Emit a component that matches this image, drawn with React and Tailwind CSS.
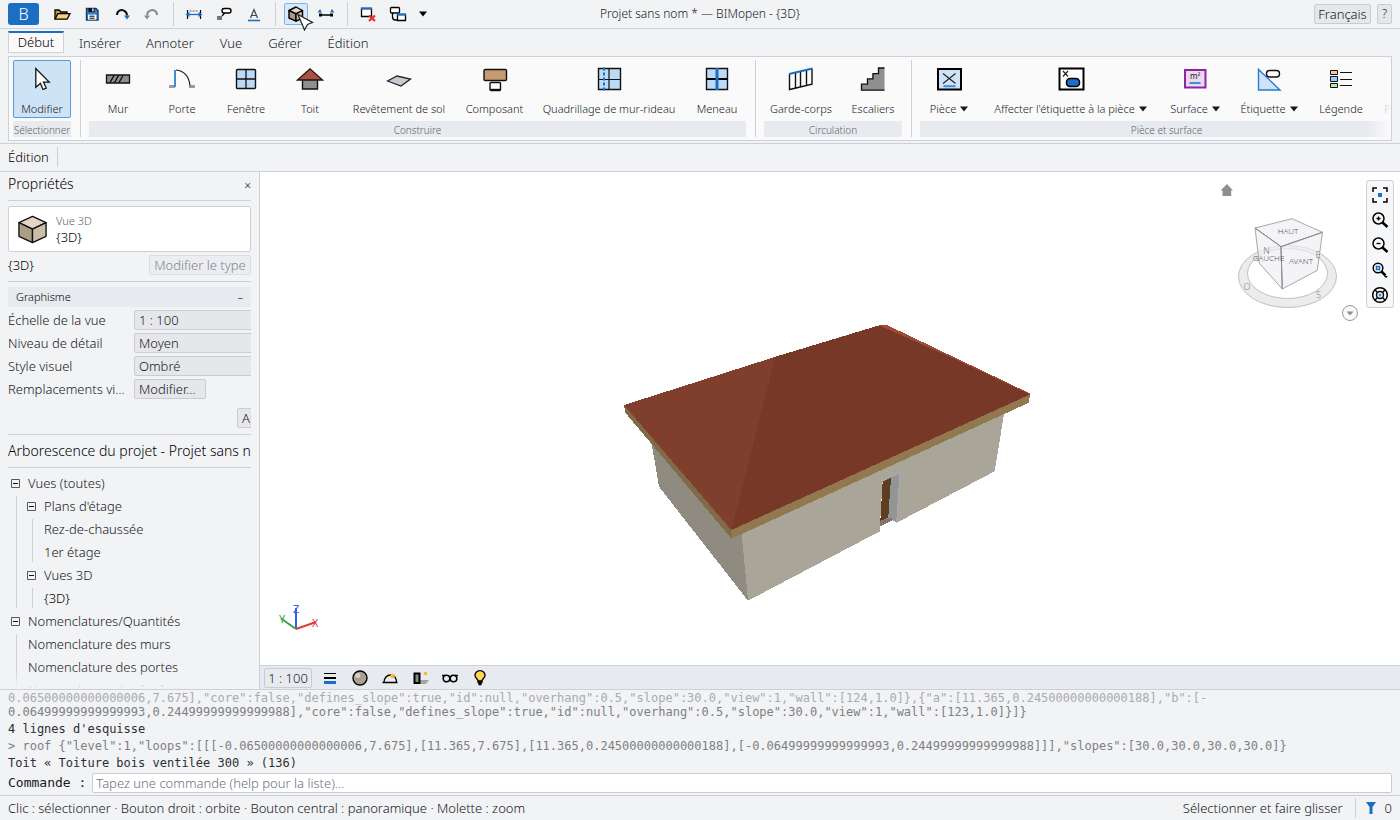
import React from 'react';
import clsx from 'clsx';

/* Quick access icons, 20x20 */

const OpenIcon = () => (
  <svg width="20" height="20" viewBox="0 0 20 20">
    <path d="M3 15V6h4l2 2h6v2" fill="#c99a3c" stroke="#000" strokeWidth="1.3" />
    <path d="M3 15.2 5.8 9.6H18l-2.8 5.6Z" fill="#f3cf76" stroke="#000" strokeWidth="1.3" />
  </svg>
);

const SaveIcon = () => (
  <svg width="20" height="20" viewBox="0 0 20 20">
    <path d="M4.5 4.5h9.5l2 2v9.5H4.5Z" fill="#2f7dd0" stroke="#1c3f66" strokeWidth="1.4" />
    <path d="M6.5 4h6v4.1h-6Z" fill="#111" />
    <path d="M10.2 4.6h1.4v2.6h-1.4Z" fill="#fff" />
    <path d="M6 10.6h8.4v5H6Z" fill="#fff" />
    <path d="M7.5 12.2h5M7.5 14.2h5" stroke="#000" strokeWidth="1" />
  </svg>
);

const RedoIcon = ({ color, tip, flip }) => (
  <svg width="20" height="20" viewBox="0 0 20 20">
    <g transform={flip ? 'translate(20 0) scale(-1 1)' : undefined}>
      <path d="M5 11C5 6.6 9 5 12 6.6c2 1 3 2.8 3 5" fill="none" stroke={color} strokeWidth="2" />
      <path d="M12 11.5h6L15 15.6Z" fill={tip} />
    </g>
  </svg>
);

const DimensionIcon = () => (
  <svg width="20" height="20" viewBox="0 0 20 20" fill="none">
    <path d="M5.5 7h9" stroke="#aaa" strokeWidth="2" strokeDasharray="2 1" />
    <path d="M3.5 6v9M16.5 6v9" stroke="#000" strokeWidth="1.2" />
    <path d="M4.5 10.5h11" stroke="#1b6ec4" strokeWidth="1.3" />
    <path d="m1.5 10.5 4-2.4v4.8ZM18.5 10.5l-4-2.4v4.8Z" fill="#1b6ec4" />
  </svg>
);

const TagIcon = () => (
  <svg width="20" height="20" viewBox="0 0 20 20" fill="none">
    <path d="M3 12h5v4H3Z" fill="#777" />
    <path d="m8 12 3-3.5" stroke="#000" strokeWidth="1.2" />
    <rect x="8" y="4.5" width="9" height="4.5" rx="2.2" fill="#fff" stroke="#000" strokeWidth="1.4" />
  </svg>
);

const TextIcon = () => (
  <svg width="20" height="20" viewBox="0 0 20 20" fill="none">
    <path d="m6.5 14 3.5-8.5L13.5 14M7.5 11.5h5" stroke="#444" strokeWidth="1.2" />
    <path d="M4 16.5h12" stroke="#1b6ec4" strokeWidth="1.6" />
  </svg>
);

const CubeIcon = ({ size = 20 }) => (
  <svg width={size} height={size} viewBox="0 0 32 32" stroke="#111" strokeWidth="1.4" strokeLinejoin="round">
    <path d="M2 9 16 2.5 30 9 16 15.5Z" fill="#e3d7c3" />
    <path d="M2 9v14l14 6.5v-14Z" fill="#ab9d86" />
    <path d="M30 9v14l-14 6.5v-14Z" fill="#cbbda6" />
  </svg>
);

const QuickCubeIcon = () => (
  <svg width="20" height="20" viewBox="0 0 20 20" stroke="#000" strokeWidth="1.4" strokeLinejoin="round">
    <path d="m3 6.5 7-3.5 6.5 3.5L10 9.8Z" fill="#e3d7c3" />
    <path d="M3 6.5v7.5l7 3.2V9.8Z" fill="#ab9d86" />
    <path d="M16.5 6.5v7.5L10 17.2V9.8Z" fill="#cbbda6" />
  </svg>
);

const SectionIcon = () => (
  <svg width="20" height="20" viewBox="0 0 20 20">
    <path d="M4 11h12" stroke="#000" strokeWidth="1.5" />
    <path d="M3 9.5h3v3H3ZM14 9.5h3v3h-3Z" fill="#000" />
    <path d="M1.5 8.5 4 5l2 3.5ZM14 8.5 16 5l2.5 3.5Z" fill="#1b6ec4" />
  </svg>
);

const CloseViewsIcon = () => (
  <svg width="20" height="20" viewBox="0 0 20 20">
    <path d="M3.5 4.5h10v8h-10Z" fill="#fff" stroke="#000" strokeWidth="1.3" />
    <path d="M3 4.5h11" stroke="#1b6ec4" strokeWidth="2" />
    <path d="m11 11.5 6 5.5M17 11.5 11 17" stroke="#e03030" strokeWidth="2.2" />
  </svg>
);

const SwitchViewsIcon = () => (
  <svg width="20" height="20" viewBox="0 0 20 20" fill="#fff" stroke="#000" strokeWidth="1.3">
    <rect x="2.5" y="3.5" width="9" height="5.5" rx="1" />
    <path d="M4.500 9v4c0 2 1 3 3 3h2" fill="none" />
    <path d="M9.500 10.500h8v6h-8Z" />
    <path d="M9 10.500h9" stroke="#1b6ec4" strokeWidth="2" />
  </svg>
);

const CaretIcon = ({ className }) => (
  <svg width="8" height="6" viewBox="0 0 8 6" className={className}>
    <path d="M0 0.5h8L4 5.5Z" fill="currentColor" />
  </svg>
);

/* Ribbon icons, 28x28 */

const Icon28 = ({ children }) => (
  <svg width="28" height="28" viewBox="0 0 28 28" fill="none">{children}</svg>
);

const icons = {
  modify: (
    <Icon28>
      <path d="M7.8 3.5v18.8l4.6-4 2.6 6.2 3.2-1.4-2.7-6h5.7Z" fill="#fff" stroke="#111" strokeWidth="1.3" />
    </Icon28>
  ),
  wall: (
    <Icon28>
      <path d="M2.5 10h23v8h-23Z" fill="#8c8c8c" stroke="#111" strokeWidth="1.3" />
      <path d="m6 17.5 4-7M10.5 17.5l4-7M15 17.5l4-7" stroke="#000" strokeWidth="1.2" />
    </Icon28>
  ),
  door: (
    <Icon28>
      <path d="M1 20h6v3H1ZM21 20h6v3h-6Z" fill="#9a9a9a" />
      <path d="M8 5c8 1 13 6.5 14 15.5" stroke="#222" strokeWidth="1.2" />
      <path d="M7 5v17" stroke="#3f8cda" strokeWidth="2" />
    </Icon28>
  ),
  window: (
    <Icon28>
      <rect x="4.5" y="4.5" width="19" height="19" rx="1" fill="#bcdaf5" stroke="#111" strokeWidth="1.4" />
      <path d="M14 4.5v19M4.5 14h19" stroke="#111" strokeWidth="1.3" />
    </Icon28>
  ),
  roof: (
    <Icon28>
      <path d="M6.5 13h15v11h-15Z" fill="#8f8f8f" stroke="#111" strokeWidth="1.4" />
      <path d="M1.5 15 14 3.8 26.5 15Z" fill="#ad523f" stroke="#221512" strokeWidth="1.3" />
    </Icon28>
  ),
  floor: (
    <Icon28>
      <path d="m2.5 16 9.5-5 13.5 3L16 21Z" fill="#c5cbd5" stroke="#222" strokeWidth="1.3" />
    </Icon28>
  ),
  component: (
    <Icon28>
      <rect x="3" y="4.5" width="22.5" height="11" rx="1.2" fill="#c79b72" stroke="#111" strokeWidth="1.4" />
      <rect x="9" y="17.5" width="10.5" height="8" rx="1" fill="#fff" stroke="#111" strokeWidth="1.4" />
      <path d="M9.5 24.8h10" stroke="#111" strokeWidth="2" />
    </Icon28>
  ),
  curtain: (
    <Icon28>
      <path d="M3.5 3.5h22v21h-22Z" fill="#bcdaf5" stroke="#111" strokeWidth="1.4" />
      <path d="M14 3.5v21M3.5 14.5h22" stroke="#111" strokeWidth="1.2" />
      <path d="M9 2.5v23" stroke="#1b6ec4" strokeWidth="2" strokeDasharray="3 2" />
    </Icon28>
  ),
  mullion: (
    <Icon28>
      <path d="M3.5 3.5h21v21h-21Z" fill="#bcdaf5" stroke="#111" strokeWidth="1.4" />
      <path d="M3.5 14h21" stroke="#000" strokeWidth="2" />
      <path d="M14 3v22" stroke="#1b6ec4" strokeWidth="3" />
    </Icon28>
  ),
  railing: (
    <Icon28>
      <path d="M2.5 9v15.5L25 19.2V4M8.5 8v14.5M13.5 7v14.5M19.5 5.5V20" stroke="#111" strokeWidth="1.4" />
      <path d="M2 9 25.5 3.5" stroke="#1b6ec4" strokeWidth="2" />
    </Icon28>
  ),
  stairs: (
    <Icon28>
      <path d="M2.5 25.2v-6h5.5v-5.4h5.5V8.600H19V3h6.5v22.2Z" fill="#8f8f8f" />
      <path d="M25.5 3H19.5v5.6H14v5.2H8.5v5.4h-6v6h23" stroke="#111" strokeWidth="1.3" />
    </Icon28>
  ),
  room: (
    <Icon28>
      <path d="M3 4h23v20.5H3Z" fill="#cfe3f8" stroke="#000" strokeWidth="2" />
      <path d="m8 8.5 12.5 10M20.5 8.5 8 18.5" stroke="#222" strokeWidth="1.2" />
      <path d="M8.5 21.2h12" stroke="#3f8cda" strokeWidth="2" />
    </Icon28>
  ),
  roomTag: (
    <Icon28>
      <path d="M2.5 3.5h24v21h-24Z" fill="#fff" stroke="#000" strokeWidth="2" />
      <path d="m6 6 5 5.5M11 6l-5 5.5" stroke="#222" strokeWidth="1.2" />
      <rect x="9.5" y="13.5" width="13" height="8" rx="3.5" fill="#1b6ec4" stroke="#000" strokeWidth="1.5" />
    </Icon28>
  ),
  area: (
    <Icon28>
      <path d="M4 5h20.5v17.5H4Z" fill="#ead8ec" stroke="#8e24a0" strokeWidth="2" />
      <text x="9" y="14" fontSize="8" fontWeight="400" fill="#222">m²</text>
      <path d="M8.5 18h11" stroke="#3f8cda" strokeWidth="2" />
    </Icon28>
  ),
  label: (
    <Icon28>
      <path d="M3.5 4.5v20.5H25Z" fill="#cfe3f8" stroke="#2a7bd0" strokeWidth="1.4" />
      <rect x="11.5" y="5.5" width="13" height="6.5" rx="3" fill="#fff" stroke="#111" strokeWidth="1.4" />
    </Icon28>
  ),
  legend: (
    <Icon28>
      <g stroke="#111" strokeWidth="1">
        <path d="M3.5 5.5h7v4h-7Z" fill="#ffc48f" />
        <path d="M3.5 11.5h7v5h-7Z" fill="#9ccfff" />
        <path d="M3.5 18.5h7v4h-7Z" fill="#b9ea98" />
        <path d="M13 7.5h12M13 14.5h12M13 20.5h12" />
      </g>
    </Icon28>
  ),
};

const tabs = [
  { label: 'Début', width: 'w-[56px]', active: true },
  { label: 'Insérer', width: 'w-[60px]' },
  { label: 'Annoter', width: 'w-[68px]' },
  { label: 'Vue', width: 'w-[42px]' },
  { label: 'Gérer', width: 'w-[54px]' },
  { label: 'Édition', width: 'w-[60px]' },
];

const ribbonGroups = [
  {
    label: 'Sélectionner',
    items: [{ label: 'Modifier', icon: 'modify', width: 'w-[58px]', active: true }],
  },
  {
    label: 'Construire',
    items: [
      { label: 'Mur', icon: 'wall', width: 'w-[58px]' },
      { label: 'Porte', icon: 'door', width: 'w-[58px]' },
      { label: 'Fenêtre', icon: 'window', width: 'w-[58px]' },
      { label: 'Toit', icon: 'roof', width: 'w-[58px]' },
      { label: 'Revêtement de sol', icon: 'floor', width: 'w-[108px]' },
      { label: 'Composant', icon: 'component', width: 'w-[71px]' },
      { label: 'Quadrillage de mur-rideau', icon: 'curtain', width: 'w-[146px]' },
      { label: 'Meneau', icon: 'mullion', width: 'w-[58px]' },
    ],
  },
  {
    label: 'Circulation',
    items: [
      { label: 'Garde-corps', icon: 'railing', width: 'w-[74px]' },
      { label: 'Escaliers', icon: 'stairs', width: 'w-[58px]' },
    ],
  },
  {
    label: 'Pièce et surface',
    items: [
      { label: 'Pièce', icon: 'room', width: 'w-[58px]', menu: true },
      { label: "Affecter l'étiquette à la pièce", icon: 'roomTag', width: 'w-[173px]', menu: true },
      { label: 'Surface', icon: 'area', width: 'w-[64px]', menu: true },
      { label: 'Étiquette', icon: 'label', width: 'w-[72px]', menu: true },
      { label: 'Légende', icon: 'legend', width: 'w-[60px]' },
      { label: 'Plan', width: 'w-[36px]' },
    ],
  },
];

const tree = [
  {
    label: 'Vues (toutes)',
    children: [
      { label: "Plans d'étage", children: [{ label: 'Rez-de-chaussée' }, { label: '1er étage' }] },
      { label: 'Vues 3D', children: [{ label: '{3D}', active: true }] },
    ],
  },
  {
    label: 'Nomenclatures/Quantités',
    children: [
      { label: 'Nomenclature des murs' },
      { label: 'Nomenclature des portes' },
      { label: 'Nomenclature des fenêtres' },
    ],
  },
];

const history = [
  { text: '0.06500000000000006,7.675],"core":false,"defines_slope":true,"id":null,"overhang":0.5,"slope":30.0,"view":1,"wall":[124,1.0]},{"a":[11.365,0.24500000000000188],"b":[-', tone: 'text-[#a9abb0]', tight: true },
  { text: '0.06499999999999993,0.24499999999999988],"core":false,"defines_slope":true,"id":null,"overhang":0.5,"slope":30.0,"view":1,"wall":[123,1.0]}]}', tone: 'text-[#7d7f84]' },
  { text: "4 lignes d'esquisse", tone: 'text-[#2c2e33]' },
  { text: '> roof {"level":1,"loops":[[[-0.06500000000000006,7.675],[11.365,7.675],[11.365,0.24500000000000188],[-0.06499999999999993,0.24499999999999988]]],"slopes":[30.0,30.0,30.0,30.0]}', tone: 'text-[#7d7f84]' },
  { text: 'Toit « Toiture bois ventilée 300 » (136)', tone: 'text-[#2c2e33]' },
];

const QuickButton = ({ label, active, children }) => (
  <button
    aria-label={label}
    className={clsx(
      'relative flex h-[22px] w-6 items-center justify-center rounded-xs',
      active && 'border border-[#7fb2e6] bg-[#d9e8f8]'
    )}
  >
    {children}
  </button>
);

const QuickSeparator = () => <div className="mr-[2px] ml-[3px] h-6 w-px bg-[#cdd0d8]" />;

const TitleBar = () => (
  <header className="grid h-[29px] grid-cols-[1fr_auto_1fr] items-center border-b border-[#cdd0d8] px-2">
    <div className="flex items-center gap-[6px]">
      <button className="mr-[5px] h-[22px] w-[31px] rounded-[3px] bg-[#1b6ec4] text-base leading-none text-white">B</button>
      <QuickButton label="Ouvrir"><OpenIcon /></QuickButton>
      <QuickButton label="Enregistrer"><SaveIcon /></QuickButton>
      <QuickButton label="Annuler"><RedoIcon color="#111" tip="#1b6ec4" /></QuickButton>
      <QuickButton label="Rétablir"><RedoIcon color="#8b8b8b" tip="#8b8b8b" flip /></QuickButton>
      <QuickSeparator />
      <QuickButton label="Cote"><DimensionIcon /></QuickButton>
      <QuickButton label="Étiqueter"><TagIcon /></QuickButton>
      <QuickButton label="Texte"><TextIcon /></QuickButton>
      <QuickSeparator />
      <QuickButton label="Vue 3D" active>
        <QuickCubeIcon />
        {/* Pointer */}
        <svg width="18" height="18" viewBox="0 0 18 18" className="absolute top-[9px] left-3 z-10">
          <path d="M1 1.5 15.5 9.5 10.5 11.5 7.5 17Z" fill="#fff" stroke="#222" strokeWidth="1.2" />
        </svg>
      </QuickButton>
      <QuickButton label="Coupe"><SectionIcon /></QuickButton>
      <QuickSeparator />
      <QuickButton label="Fermer les vues inactives"><CloseViewsIcon /></QuickButton>
      <QuickButton label="Changer de fenêtre"><SwitchViewsIcon /></QuickButton>
      <button aria-label="Personnaliser" className="flex w-[14px] justify-center text-black">
        <CaretIcon />
      </button>
    </div>
    <h1 className="text-[12px]">Projet sans nom * — BIMopen - {'{3D}'}</h1>
    <div className="flex justify-end gap-[6px]">
      <button className="h-5 w-[57px] rounded-xs border border-[#c9ccd4] bg-[#e6e7eb] leading-[18px]">Français</button>
      <button className="h-5 w-[15px] rounded-xs border border-[#c9ccd4] bg-[#e6e7eb] text-[12px] leading-[18px]">?</button>
    </div>
  </header>
);

const RibbonButton = ({ item }) => (
  <button
    className={clsx(
      'flex h-[58px] shrink-0 flex-col items-center rounded-xs border pt-1',
      item.width,
      item.active ? 'border-[#5b9bdc] bg-[#cfe3f7]' : 'border-transparent'
    )}
  >
    <span className="h-7">{item.icon && icons[item.icon]}</span>
    <span className="mt-2 flex items-center text-[11px] leading-4 whitespace-nowrap">
      {item.label}
      {item.menu && <CaretIcon className="ml-1" />}
    </span>
  </button>
);

const Ribbon = () => (
  <div className="px-2 pb-[2px]">
    <div className="relative flex overflow-hidden border border-[#cdd0d8] bg-[#fafafb] px-1 py-[3px]">
      {ribbonGroups.map((group, i) => (
        <React.Fragment key={group.label}>
          {i > 0 && <div className="mr-2 ml-[9px] w-px shrink-0 bg-[#cdd0d8]" />}
          <section className="flex shrink-0 flex-col gap-[3px]">
            <div className="flex gap-[6px]">
              {group.items.map((item) => (
                <RibbonButton key={item.label} item={item} />
              ))}
            </div>
            <div className="h-4 bg-[#e7eaef] text-center text-[10px] leading-[18px] text-[#5f636b]">{group.label}</div>
          </section>
        </React.Fragment>
      ))}
      <div className="absolute inset-y-0 right-0 w-6 bg-linear-to-r from-transparent to-[#fafafb]" />
    </div>
  </div>
);

const propertyRows = [
  { id: 'scale', label: 'Échelle de la vue', value: '1 : 100' },
  { id: 'detail', label: 'Niveau de détail', value: 'Moyen' },
  { id: 'style', label: 'Style visuel', value: 'Ombré' },
];

const Properties = () => (
  <section>
    <div className="flex h-[29px] items-center justify-between border-b border-[#cdd0d8] pb-1">
      <h2 className="text-[14px] text-[#000]">Propriétés</h2>
      <button aria-label="Fermer" className="pt-[3px] text-[12px]">×</button>
    </div>
    <div className="mt-[5px] flex h-[46px] items-center gap-2 rounded-xs border border-[#cdd0d8] bg-white px-2">
      <CubeIcon size={31} />
      <div>
        <p className="text-[11px] leading-4 text-[#5f636b]">Vue 3D</p>
        <p className="leading-4 text-[#000]">{'{3D}'}</p>
      </div>
    </div>
    <div className="mt-[3px] flex h-5 items-center justify-between">
      <span className="text-[#000]">{'{3D}'}</span>
      <button disabled className="h-5 w-[102px] rounded-xs border border-[#dcdee3] bg-[#ecedf0] leading-[18px] text-[#82858c]">
        Modifier le type
      </button>
    </div>
    <button className="mt-[6px] flex w-full flex-col border-t border-[#cdd0d8] pt-[5px] text-[#000]">
      <span className="flex h-5 w-full items-center justify-between bg-[#e7eaef] px-2 text-[11px]">
        Graphisme
        <span>–</span>
      </span>
    </button>
    <div className="mt-[3px] flex flex-col gap-[3px]">
      {propertyRows.map((row) => (
        <div key={row.id} className="flex h-5 items-center">
          <label htmlFor={row.id} className="w-[126px] shrink-0">{row.label}</label>
          <select id={row.id} className="h-5 w-40 shrink-0 appearance-none rounded-xs border border-[#c9ccd4] bg-[#e6e7eb] px-1 leading-[18px]">
            <option>{row.value}</option>
          </select>
        </div>
      ))}
      <div className="flex h-5 items-center">
        <span className="mr-1 w-[122px] shrink-0 truncate">Remplacements visibilité</span>
        <button className="h-5 w-[72px] rounded-xs border border-[#c9ccd4] bg-[#e6e7eb] px-1 text-left leading-[18px]">Modifier…</button>
      </div>
    </div>
    <div className="mt-[9px] border-b border-[#cdd0d8] pb-[6px]">
      <button className="ml-[229px] block h-5 w-20 rounded-xs border border-[#c9ccd4] bg-[#e6e7eb] px-1 text-left leading-[18px]">Appliquer</button>
    </div>
  </section>
);

const TreeNode = ({ node }) => (
  <li>
    {node.children ? (
      <button className="flex h-5 items-center gap-2 pl-[3px] whitespace-nowrap">
        <svg width="9" height="9" viewBox="0 0 9 9">
          <path d="M0.5 0.5h8v8h-8Z" fill="none" stroke="#555a62" />
          <path d="M2 4.5h5" stroke="#111" />
        </svg>
        {node.label}
      </button>
    ) : (
      <button className={clsx('flex h-5 items-center pl-1 whitespace-nowrap', node.active && 'text-[#000]')}>{node.label}</button>
    )}
    {node.children && (
      <ul className="mt-[3px] ml-2 flex flex-col gap-[3px] border-l border-[#cdd0d8] pl-[7px]">
        {node.children.map((child) => (
          <TreeNode key={child.label} node={child} />
        ))}
      </ul>
    )}
  </li>
);

const ProjectBrowser = () => (
  <section className="relative min-h-0 flex-1 overflow-hidden">
    <h2 className="h-[33px] border-b border-[#cdd0d8] text-[14px] leading-8 whitespace-nowrap text-[#000]">
      Arborescence du projet - Projet sans nom
    </h2>
    <ul className="mt-[5px] flex flex-col gap-[3px]">
      {tree.map((node) => (
        <TreeNode key={node.label} node={node} />
      ))}
    </ul>
    <div className="absolute inset-x-0 bottom-0 h-5 bg-linear-to-b from-transparent to-[#f2f3f5]" />
  </section>
);

const House = () => (
  <svg viewBox="260 172 1140 493" className="absolute inset-0 h-full w-full" shapeRendering="crispEdges">
    <path d="M651 440 659 486.7 748 600.7 741.3 530Z" fill="#8f8b80" />
    <path d="M741.3 530 748 600.7 879.5 531.5 882.7 480.7 900 473 896.7 522.7 994.7 471.3 1004.7 410 880 440Z" fill="#a9a598" />
    {/* Door */}
    <path d="M882.7 480.7 900 473 896.7 522.7 892 520 880 526Z" fill="#939496" />
    <path d="M882.7 481.3 891 477.5 888.3 517.5 880.3 521Z" fill="#5f3d20" />
    <path d="M880.3 521 892 517.5 892 520.5 880 526.5Z" fill="#86706a" />
    <path d="M882.3 481 900 473 896.7 522.7" fill="none" stroke="#a8aab0" />
    {/* Fascia */}
    <path d="M624 405 731.3 529.3 731.5 538.7 625.5 413Z" fill="#806a48" />
    <path d="M731.3 529.3 1030 394 1029 402.7 731.5 538.7Z" fill="#92784f" />
    {/* Roof */}
    <path d="M879.3 325.3 887 325 1030 393.5 1030 394.5 879.3 330Z" fill="#a34b35" />
    <path d="M624 405 775.7 356.7 785 360 731.3 530Z" fill="#803e2c" />
    <path d="M775.5 356.7 879.3 325.3 945 354.5 1030 394.5 731.3 530Z" fill="#783828" />
  </svg>
);

const AxisTriad = () => (
  <svg width="40" height="30" viewBox="0 0 40 30" className="absolute bottom-8 left-[18px]" fill="none" strokeWidth="2">
    <path d="M18 26V5" stroke="#2f62e0" />
    <path d="m18 26 20-7" stroke="#e03a3a" />
    <path d="M18 26 3 15.5" stroke="#35a83a" />
    <g fontSize="11" fontWeight="400" stroke="none">
      <text x="15" y="10" fill="#2f62e0">Z</text>
      <text x="34" y="24" fill="#e03a3a">X</text>
      <text x="1" y="20" fill="#35a83a">Y</text>
    </g>
  </svg>
);

const ViewCube = () => (
  <svg width="150" height="150" viewBox="1210 175 150 150" className="absolute top-[3px] right-10">
    <path d="M1220.5 190.5 1227 184l6 6.5h-1.8v5.5h-8.7v-5.5Z" fill="#8c8e93" />
    <path
      fillRule="evenodd"
      d="M1238.5 276.5a49 31 0 1 0 98 0a49 31 0 1 0-98 0ZM1247.5 273.5a40 25 0 1 1 80 0a40 25 0 1 1-80 0Z"
      fill="#ececed"
      stroke="#bfc0c3"
    />
    <g stroke="#a6a8ac" fill="#eff0f3" fillOpacity="0.7">
      <path d="m1255 228 37-9.3 30.5 13.6L1281 246.7Z" />
      <path d="m1255 228 26 18.7 1.3 42.3-23-25.7Z" />
      <path d="m1322.5 232.3-41.5 14.4 1.3 42.3 35-18.7Z" />
    </g>
    <path d="m1255 228 26 18.7 41.5-14.4M1281 246.7l1.3 42.3" stroke="#8b8d92" fill="none" />
    <g fontSize="8" fill="#55575c" textAnchor="middle">
      <text x="1288" y="234">HAUT</text>
      <text x="1268.5" y="261">GAUCHE</text>
      <text x="1301" y="264">AVANT</text>
      <g fill="#7d7f84" fontSize="9">
        <text x="1266.5" y="254">N</text>
        <text x="1318" y="258">E</text>
        <text x="1247" y="290">O</text>
        <text x="1318.5" y="298">S</text>
      </g>
    </g>
    <circle cx="1350" cy="313" r="7.5" fill="#fafafa" stroke="#97999e" />
    <path d="M1346.5 311.5h7l-3.5 4Z" fill="#8c8e93" />
  </svg>
);

const NavButton = ({ label, children }) => (
  <button aria-label={label} className="flex h-[19px] w-5 items-center justify-center">
    <svg width="18" height="18" viewBox="0 0 18 18" fill="none" stroke="#000" strokeWidth="2">{children}</svg>
  </button>
);

const NavigationBar = () => (
  <div className="absolute top-2 right-[6px] flex flex-col items-center gap-[6px] rounded-[3px] border border-[#cdd0d8] bg-[#f6f7f8] px-[3px] pt-1 pb-[3px]">
    <NavButton label="Zoom étendu">
      <path d="M2 6V2h4M12 2h4v4M16 12v4h-4M6 16H2v-4" strokeWidth="1.5" />
      <path d="M7 7h4v4H7Z" fill="#1b6ec4" stroke="none" />
    </NavButton>
    <NavButton label="Zoom avant">
      <circle cx="7.5" cy="7.5" r="5.5" strokeWidth="1.5" />
      <path d="m11.5 11.5 5 4.5" strokeWidth="2.5" />
      <path d="M5.500 7.500h4M7.500 5.500v4" strokeWidth="1.3" />
    </NavButton>
    <NavButton label="Zoom arrière">
      <circle cx="7.5" cy="7.5" r="5.5" strokeWidth="1.5" />
      <path d="m11.5 11.5 5 4.5" strokeWidth="2.5" />
      <path d="M5.5 7.5h4" strokeWidth="1.3" />
    </NavButton>
    <NavButton label="Zoom sur une zone">
      <circle cx="7" cy="7" r="4.8" strokeWidth="1.5" />
      <path d="m10.5 10.5 4 4" strokeWidth="2.5" />
      <path d="M5.5 5.5h3v3h-3Z" fill="#fff" stroke="#1b6ec4" strokeWidth="1.5" />
      <path d="M13 15h4l-2 2Z" fill="#000" stroke="none" />
    </NavButton>
    <NavButton label="Disque de navigation">
      <circle cx="9" cy="9" r="7.3" strokeWidth="1.5" />
      <circle cx="9" cy="9" r="3.5" strokeWidth="1.4" />
      <path d="m3.8 3.8 2.7 2.7M14.2 3.8l-2.7 2.7M3.8 14.2l2.7-2.7M14.2 14.2l-2.7-2.7" strokeWidth="1.4" />
      <circle cx="9" cy="9" r="1.5" fill="#3f8cda" stroke="none" />
    </NavButton>
  </div>
);

const ViewButton = ({ label, children }) => (
  <button aria-label={label} className="flex h-5 w-6 items-center justify-center">
    <svg width="18" height="18" viewBox="0 0 18 18" fill="none" stroke="#000" strokeWidth="1.4">{children}</svg>
  </button>
);

const ViewControlBar = () => (
  <div className="flex h-6 items-center gap-[6px] border-t border-[#cdd0d8] bg-[#e7eaef] px-1">
    <button className="h-5 w-12 rounded-xs border border-[#c9ccd4] leading-[18px]">1 : 100</button>
    <ViewButton label="Niveau de détail">
      <path d="M3 4.5h12" strokeWidth="1" />
      <path d="M3 9h12" strokeWidth="2" />
      <path d="M3 13.5h12" stroke="#1b6ec4" strokeWidth="3" />
    </ViewButton>
    <ViewButton label="Style visuel">
      <circle cx="9" cy="9" r="7" fill="#aaa08e" />
      <circle cx="6.8" cy="6.5" r="2.5" fill="#d8d1c4" stroke="none" />
    </ViewButton>
    <ViewButton label="Trajectoire du soleil">
      <path d="M1.5 13.5h15M3 13.5C3 9 6 6 9.5 6s6 3 6 7.5" />
      <circle cx="11.5" cy="7" r="2.3" fill="#ffb42e" stroke="none" />
    </ViewButton>
    <ViewButton label="Ombres">
      <path d="M8 15h7l3-4H8Z" fill="#a5a5a5" stroke="none" />
      <path d="M3.5 4.5h5v9.5h-5Z" fill="#888" strokeWidth="2" />
      <circle cx="14.5" cy="4.5" r="1.8" fill="#ffb42e" stroke="none" />
    </ViewButton>
    <ViewButton label="Masquage temporaire">
      <circle cx="5.5" cy="9.5" r="3.3" strokeWidth="1.6" />
      <circle cx="12.5" cy="9.5" r="3.3" strokeWidth="1.6" />
      <path d="M1 6.5h3M14 6.5h3" />
    </ViewButton>
    <ViewButton label="Éléments cachés">
      <path d="M7 12c0-2-3-2.500-3-5.700a5 4.700 0 0 1 10 0c0 3.200-3 3.700-3 5.700Z" fill="#ffd84a" />
      <path d="M6.5 13.2h5M7.5 15.2h3" strokeWidth="2" />
    </ViewButton>
  </div>
);

const CommandLine = () => (
  <section className="border-t border-[#cdd0d8] px-2 pb-[2px] font-['DejaVu_Sans_Mono',monospace] font-normal">
    <div className="flex flex-col gap-[3px] pt-px text-[12px] leading-[14px]">
      {history.map((line) => (
        <p key={line.text} className={clsx('overflow-hidden whitespace-pre', line.tone, line.tight && '-mb-[3px]')}>
          {line.text}
        </p>
      ))}
    </div>
    <div className="mt-[3px] flex items-center gap-[6px]">
      <label htmlFor="command" className="text-[13px] whitespace-pre">Commande :</label>
      <input
        id="command"
        placeholder="Tapez une commande (help pour la liste)…"
        className="h-5 flex-1 rounded-xs border border-[#c9ccd4] bg-white px-[3px] font-['Noto_Sans',sans-serif] text-[13px] font-light placeholder:text-[#6f7279]"
      />
    </div>
  </section>
);

const StatusBar = () => (
  <footer className="flex h-[25px] items-center border-t border-[#cdd0d8] px-2">
    <span>Clic : sélectionner · Bouton droit : orbite · Bouton central : panoramique · Molette : zoom</span>
    <span className="ml-auto">Sélectionner et faire glisser</span>
    <div className="mr-[9px] ml-3 h-5 w-px bg-[#cdd0d8]" />
    <svg width="12" height="12" viewBox="0 0 12 12">
      <path d="M1 0h10L7.5 5v7h-3V5Z" fill="#1b6ec4" />
    </svg>
    <span className="ml-2">0</span>
  </footer>
);

const App = () => (
  <div className="flex h-screen flex-col overflow-hidden bg-[#f2f3f5] font-['Noto_Sans',sans-serif] text-[13px] leading-5 font-light text-[#16181c]">
    <TitleBar />
    <nav className="flex gap-[6px] px-2 pt-[2px] pb-[3px]">
      {tabs.map((tab) => (
        <button
          key={tab.label}
          className={clsx(
            'h-[22px]',
            tab.width,
            tab.active
              ? 'border border-t-2 border-[#cdd0d8] border-t-[#1b6ec4] bg-[#fafafb] leading-[19px] text-[#000]'
              : 'pt-[2px]'
          )}
        >
          {tab.label}
        </button>
      ))}
    </nav>
    <Ribbon />

    {/* Options bar */}
    <div className="flex h-[29px] items-center border-y border-[#cdd0d8] px-2 pb-[2px]">
      <span className="border-r border-[#cdd0d8] pr-2 text-[#000]">Édition</span>
    </div>

    <main className="flex min-h-0 flex-1">
      <aside className="w-[260px] shrink-0 border-r border-[#cdd0d8] px-2">
        <div className="flex h-full flex-col overflow-hidden">
          <Properties />
          <ProjectBrowser />
        </div>
      </aside>
      <div className="flex min-w-0 flex-1 flex-col">
        <div className="relative flex-1 bg-white">
          <House />
          <AxisTriad />
          <ViewCube />
          <NavigationBar />
        </div>
        <ViewControlBar />
      </div>
    </main>

    <CommandLine />
    <StatusBar />
  </div>
);

export default App;
